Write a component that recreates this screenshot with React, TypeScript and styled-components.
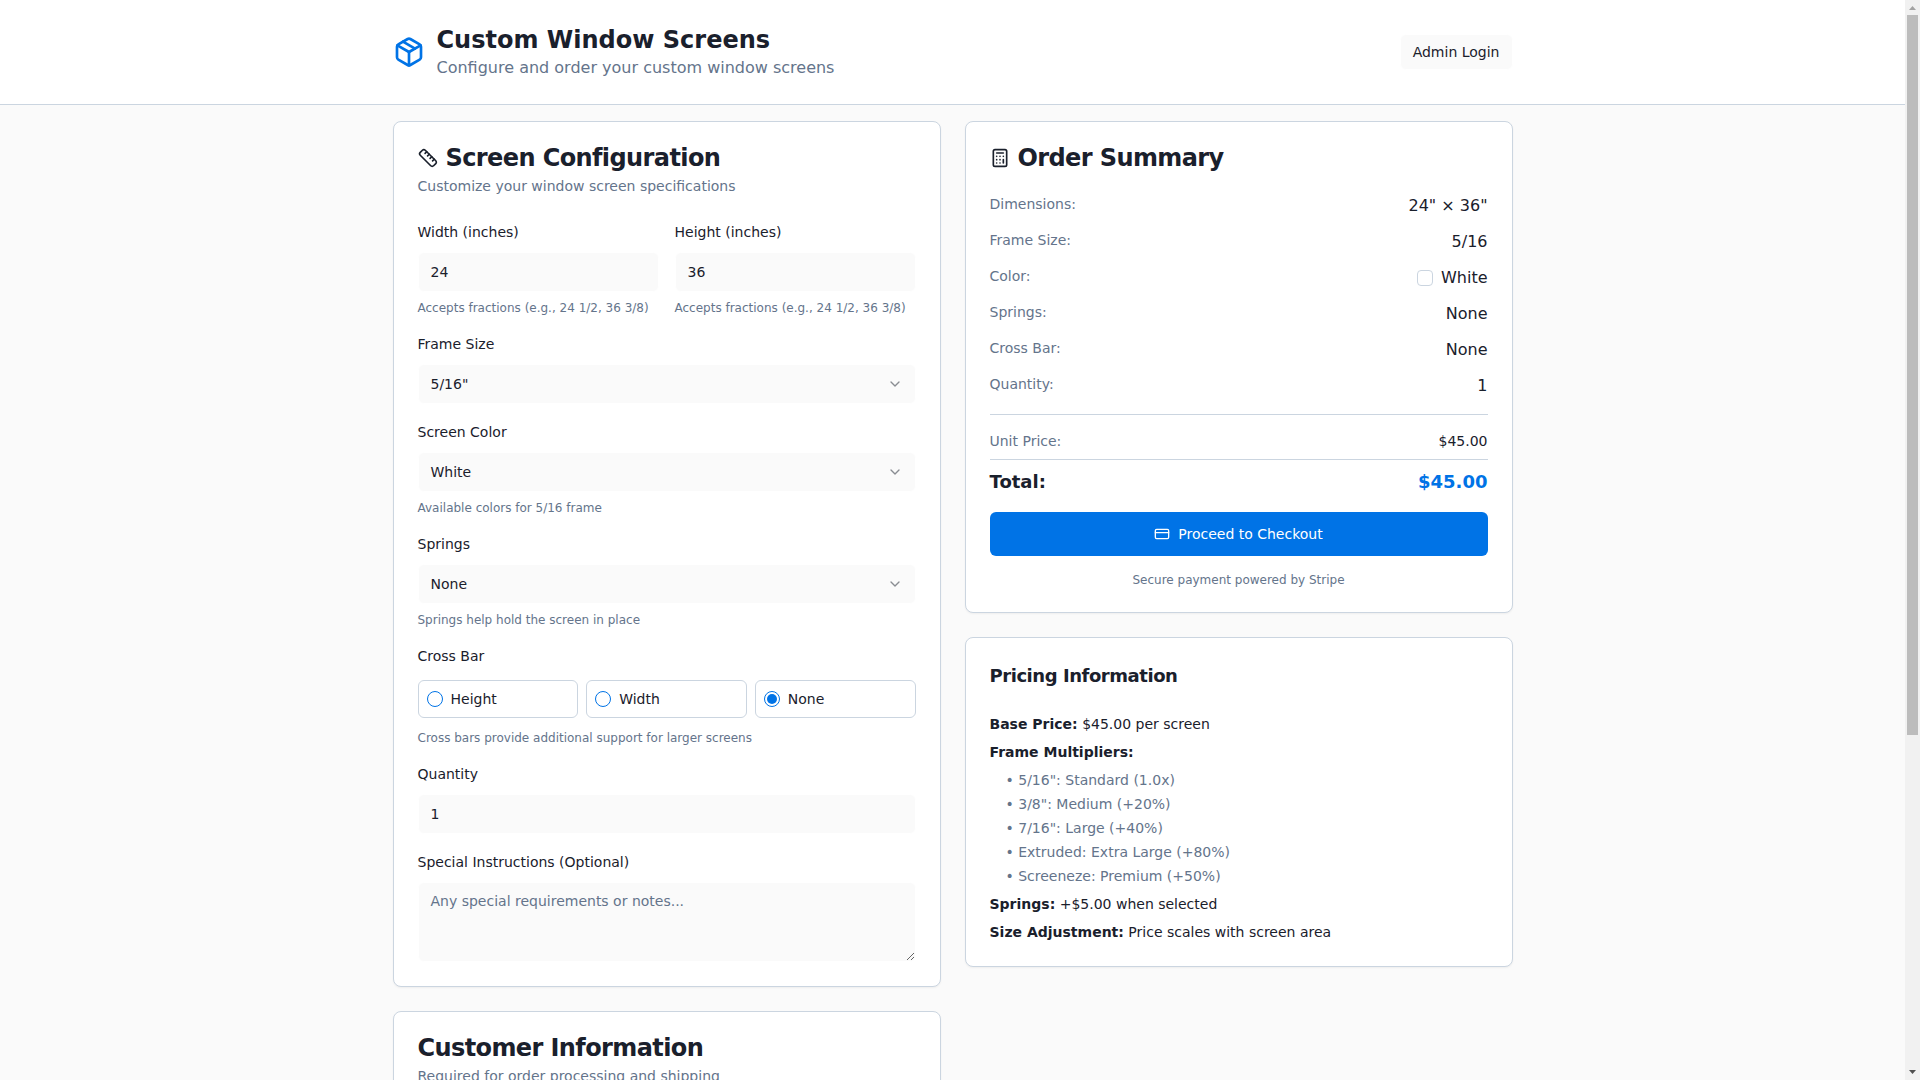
import React from "react";
import styled, { createGlobalStyle } from "styled-components";
import { Package, Ruler, Calculator, CreditCard, ChevronDown } from "lucide-react";

const ink = "#1a202c";
const muted = "#64748b";
const line = "#cbd5e0";
const wash = "#fafafa";
const blue = "#0073e6";

const Global = createGlobalStyle`
  * { box-sizing: border-box; }
  html, body { margin: 0; padding: 0; }
  body {
    background: ${wash};
    color: ${ink};
    font-family: "DejaVu Sans", sans-serif;
    font-size: 16px;
    line-height: 24px;
  }
`;

const Page = styled.div`
  margin-right: 15px;
`;
const ScrollTrack = styled.div`
  position: fixed;
  top: 0;
  right: 0;
  bottom: 0;
  width: 15px;
  background: #f1f1f1;
`;
const ScrollThumb = styled.div`
  position: absolute;
  top: 15px;
  left: 2px;
  width: 11px;
  height: 720px;
  background: #bcbcbc;
`;
const ScrollArrow = styled.svg<{ $down?: boolean }>`
  position: absolute;
  left: 4px;
  width: 7px;
  height: 4px;
  ${(p) => (p.$down ? "bottom: 6px;" : "top: 6px;")}
`;
const Header = styled.header`
  background: #fff;
  border-bottom: 1px solid ${line};
  padding: 24px 0;
`;
const HeaderInner = styled.div`
  width: 1120px;
  margin: 0 auto;
  display: flex;
  align-items: center;
  justify-content: space-between;
`;
const Brand = styled.div`
  display: flex;
  align-items: center;
  gap: 12px;
  color: ${blue};
`;
const BrandTitle = styled.h1`
  margin: 0;
  font-size: 24px;
  line-height: 32px;
  font-weight: 700;
  color: ${ink};
`;
const BrandSub = styled.p`
  margin: 0;
  font-size: 16px;
  line-height: 24px;
  color: ${muted};
`;
const AdminButton = styled.button`
  height: 36px;
  padding: 0 12px;
  border: 1px solid #fff;
  border-radius: 6px;
  background: ${wash};
  color: ${ink};
  font: 500 14px/20px "DejaVu Sans", sans-serif;
`;
const Main = styled.main`
  width: 1120px;
  margin: 0 auto;
  padding: 16px 0;
  display: grid;
  grid-template-columns: 548px 548px;
  gap: 24px;
  align-items: start;
`;
const Column = styled.div`
  display: flex;
  flex-direction: column;
  gap: 24px;
`;
const Card = styled.section`
  background: #fff;
  border: 1px solid ${line};
  border-radius: 8px;
  box-shadow: 0 1px 2px rgba(0, 0, 0, 0.05);
  padding: 24px;
`;
const CardHead = styled.div`
  margin-bottom: 24px;
`;
const CardTitle = styled.h2`
  margin: 0;
  display: flex;
  align-items: center;
  gap: 8px;
  font-size: 24px;
  line-height: 24px;
  font-weight: 600;
  letter-spacing: -0.6px;
  color: ${ink};
`;
const CardDesc = styled.p`
  margin: 6px 0 0;
  font-size: 14px;
  line-height: 20px;
  color: ${muted};
`;
const Stack = styled.div`
  display: grid;
  gap: 16px;
`;
const TwoCols = styled.div`
  display: grid;
  grid-template-columns: 1fr 1fr;
  gap: 16px;
`;
const Label = styled.label<{ $gap?: number }>`
  display: block;
  font-size: 14px;
  line-height: 24px;
  font-weight: 500;
  margin-bottom: ${(p) => p.$gap ?? 8}px;
  color: ${ink};
`;
const TextInput = styled.input`
  display: block;
  width: 100%;
  height: 40px;
  padding: 0 12px;
  border: 1px solid #fff;
  border-radius: 6px;
  background: ${wash};
  color: ${ink};
  font: 14px/20px "DejaVu Sans", sans-serif;
  outline: none;
`;
const SelectBox = styled.button`
  display: flex;
  width: 100%;
  height: 40px;
  padding: 0 12px;
  align-items: center;
  justify-content: space-between;
  border: 1px solid #fff;
  border-radius: 6px;
  background: ${wash};
  color: ${ink};
  font: 14px/20px "DejaVu Sans", sans-serif;
  svg {
    opacity: 0.5;
  }
`;
const TextArea = styled.textarea`
  display: block;
  width: 100%;
  height: 80px;
  min-height: 80px;
  padding: 8px 12px;
  border: 1px solid #fff;
  border-radius: 6px;
  background: ${wash};
  color: ${ink};
  font: 14px/20px "DejaVu Sans", sans-serif;
  resize: vertical;
  outline: none;
  &::placeholder {
    color: ${muted};
    opacity: 1;
  }
`;
const Hint = styled.p<{ $gap?: number }>`
  margin: ${(p) => p.$gap ?? 8}px 0 0;
  font-size: 12px;
  line-height: 16px;
  color: ${muted};
`;
const RadioRow = styled.div`
  display: grid;
  grid-template-columns: repeat(3, 1fr);
  gap: 8px;
`;
const RadioCard = styled.div`
  display: flex;
  align-items: center;
  gap: 8px;
  height: 38px;
  padding: 8px;
  border: 1px solid ${line};
  border-radius: 6px;
  font-size: 14px;
  line-height: 20px;
`;
const RadioDot = styled.span<{ $on?: boolean }>`
  flex: none;
  width: 16px;
  height: 16px;
  border-radius: 50%;
  border: 1px solid ${blue};
  display: flex;
  align-items: center;
  justify-content: center;
  &::after {
    content: "";
    display: ${(p) => (p.$on ? "block" : "none")};
    width: 10px;
    height: 10px;
    border-radius: 50%;
    background: ${blue};
  }
`;
const Rows = styled.div`
  display: grid;
  gap: 12px;
`;
const Row = styled.div`
  display: flex;
  justify-content: space-between;
  align-items: flex-start;
`;
const RowLabel = styled.span`
  font-size: 14px;
  line-height: 20px;
  color: ${muted};
`;
const RowValue = styled.span`
  display: flex;
  align-items: center;
  gap: 8px;
  font-size: 16px;
  line-height: 24px;
  font-weight: 500;
  color: ${ink};
`;
const Swatch = styled.span`
  width: 16px;
  height: 16px;
  border-radius: 4px;
  border: 1px solid ${line};
  background: #fff;
`;
const UnitRow = styled.div`
  margin-top: 16px;
  padding: 16px 0 8px;
  border-top: 1px solid ${line};
  border-bottom: 1px solid ${line};
  display: flex;
  justify-content: space-between;
  font-size: 14px;
  line-height: 20px;
  color: ${muted};
`;
const UnitValue = styled.span`
  color: ${ink};
  font-size: 14px;
`;
const TotalRow = styled.div`
  margin-top: 8px;
  display: flex;
  justify-content: space-between;
  font-size: 18px;
  line-height: 28px;
  font-weight: 700;
`;
const TotalValue = styled.span`
  color: ${blue};
`;
const CheckoutButton = styled.button`
  margin-top: 16px;
  width: 100%;
  height: 44px;
  display: flex;
  align-items: center;
  justify-content: center;
  gap: 8px;
  border: 0;
  border-radius: 6px;
  background: ${blue};
  color: #fff;
  font: 500 14px/20px "DejaVu Sans", sans-serif;
`;
const Secure = styled.p`
  margin: 16px 0 0;
  text-align: center;
  font-size: 12px;
  line-height: 16px;
  color: ${muted};
`;
const PricingTitle = styled.h3`
  margin: 0 0 24px;
  font-size: 18px;
  line-height: 28px;
  font-weight: 600;
  letter-spacing: -0.45px;
  color: ${ink};
`;
const PricingBody = styled.div`
  display: grid;
  gap: 8px;
  font-size: 14px;
  line-height: 20px;
  p {
    margin: 0;
  }
  strong {
    font-weight: 600;
  }
`;
const PriceList = styled.ul`
  list-style: none;
  margin: 0;
  padding: 0 0 0 16px;
  display: grid;
  gap: 4px;
  color: ${muted};
`;

const Chevron = () => <ChevronDown size={16} />;
const customerFields = [
  ["Full Name", "John Smith"],
  ["Email Address", "john@example.com"],
  ["Phone Number", "(555) 123-4567"],
  ["Shipping Address", "123 Main St"],
  ["City, State, ZIP", "Anytown, CA 90210"],
];
const summary = [
  ["Dimensions:", '24" × 36"'],
  ["Frame Size:", "5/16"],
  ["Color:", "White"],
  ["Springs:", "None"],
  ["Cross Bar:", "None"],
  ["Quantity:", "1"],
];
const multipliers = [
  '5/16": Standard (1.0x)',
  '3/8": Medium (+20%)',
  '7/16": Large (+40%)',
  "Extruded: Extra Large (+80%)",
  "Screeneze: Premium (+50%)",
];
const hintFractions = "Accepts fractions (e.g., 24 1/2, 36 3/8)";

export default function App() {
  return (
    <Page>
      <Global />
      <Header>
        <HeaderInner>
          <Brand>
            <Package size={32} />
            <div>
              <BrandTitle>Custom Window Screens</BrandTitle>
              <BrandSub>Configure and order your custom window screens</BrandSub>
            </div>
          </Brand>
          <AdminButton>Admin Login</AdminButton>
        </HeaderInner>
      </Header>
      <Main>
        <Column>
          <Card>
            <CardHead>
              <CardTitle>
                <Ruler size={20} />
                Screen Configuration
              </CardTitle>
              <CardDesc>Customize your window screen specifications</CardDesc>
            </CardHead>
            <Stack>
              <TwoCols>
                <div>
                  <Label>Width (inches)</Label>
                  <TextInput readOnly value="24" />
                  <Hint>{hintFractions}</Hint>
                </div>
                <div>
                  <Label>Height (inches)</Label>
                  <TextInput readOnly value="36" />
                  <Hint>{hintFractions}</Hint>
                </div>
              </TwoCols>
              <div>
                <Label>Frame Size</Label>
                <SelectBox>
                  <span>5/16"</span>
                  <Chevron />
                </SelectBox>
              </div>
              <div>
                <Label>Screen Color</Label>
                <SelectBox>
                  <span>White</span>
                  <Chevron />
                </SelectBox>
                <Hint>Available colors for 5/16 frame</Hint>
              </div>
              <div>
                <Label>Springs</Label>
                <SelectBox>
                  <span>None</span>
                  <Chevron />
                </SelectBox>
                <Hint>Springs help hold the screen in place</Hint>
              </div>
              <div>
                <Label $gap={12}>Cross Bar</Label>
                <RadioRow>
                  <RadioCard>
                    <RadioDot />
                    Height
                  </RadioCard>
                  <RadioCard>
                    <RadioDot />
                    Width
                  </RadioCard>
                  <RadioCard>
                    <RadioDot $on />
                    None
                  </RadioCard>
                </RadioRow>
                <Hint $gap={12}>Cross bars provide additional support for larger screens</Hint>
              </div>
              <div>
                <Label>Quantity</Label>
                <TextInput readOnly value="1" />
              </div>
              <div>
                <Label>Special Instructions (Optional)</Label>
                <TextArea readOnly placeholder="Any special requirements or notes..." />
              </div>
            </Stack>
          </Card>
          <Card>
            <CardHead>
              <CardTitle>Customer Information</CardTitle>
              <CardDesc>Required for order processing and shipping</CardDesc>
            </CardHead>
            <Stack>
              {customerFields.map(([name, placeholder]) => (
                <div key={name}>
                  <Label>{name}</Label>
                  <TextInput readOnly placeholder={placeholder} />
                </div>
              ))}
            </Stack>
          </Card>
        </Column>
        <Column>
          <Card>
            <CardHead>
              <CardTitle>
                <Calculator size={20} />
                Order Summary
              </CardTitle>
            </CardHead>
            <Rows>
              {summary.map(([k, v]) => (
                <Row key={k}>
                  <RowLabel>{k}</RowLabel>
                  <RowValue>
                    {k === "Color:" && <Swatch />}
                    {v}
                  </RowValue>
                </Row>
              ))}
            </Rows>
            <UnitRow>
              <span>Unit Price:</span>
              <UnitValue>$45.00</UnitValue>
            </UnitRow>
            <TotalRow>
              <span>Total:</span>
              <TotalValue>$45.00</TotalValue>
            </TotalRow>
            <CheckoutButton>
              <CreditCard size={16} />
              Proceed to Checkout
            </CheckoutButton>
            <Secure>Secure payment powered by Stripe</Secure>
          </Card>
          <Card>
            <PricingTitle>Pricing Information</PricingTitle>
            <PricingBody>
              <p>
                <strong>Base Price:</strong> $45.00 per screen
              </p>
              <p>
                <strong>Frame Multipliers:</strong>
              </p>
              <PriceList>
                {multipliers.map((m) => (
                  <li key={m}>• {m}</li>
                ))}
              </PriceList>
              <p>
                <strong>Springs:</strong> +$5.00 when selected
              </p>
              <p>
                <strong>Size Adjustment:</strong> Price scales with screen area
              </p>
            </PricingBody>
          </Card>
        </Column>
      </Main>
      <ScrollTrack>
        <ScrollArrow viewBox="0 0 7 4">
          <polygon points="3.5,0 7,4 0,4" fill="#a3a3a3" />
        </ScrollArrow>
        <ScrollThumb />
        <ScrollArrow $down viewBox="0 0 7 4">
          <polygon points="0,0 7,0 3.5,4" fill="#505050" />
        </ScrollArrow>
      </ScrollTrack>
    </Page>
  );
}
